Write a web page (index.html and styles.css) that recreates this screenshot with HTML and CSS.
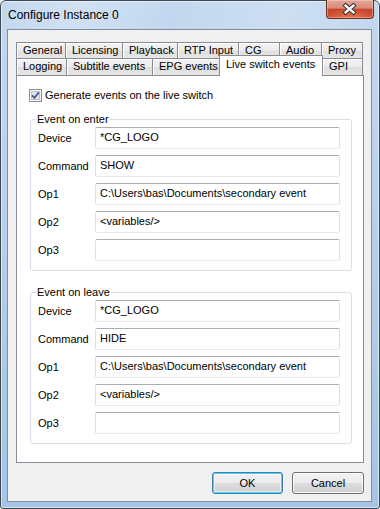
FILE: index.html
```html
<!DOCTYPE html>
<html>
<head>
<meta charset="utf-8">
<link rel="stylesheet" href="styles.css">
</head>
<body>
<div class="window">
  <div class="titlebar">
    <span class="title">Configure Instance 0</span>
    <div class="close">
      <svg width="48" height="19" viewBox="0 0 48 19">
        <path d="M20 6.5 L28 13.5 M28 6.5 L20 13.5" stroke="#3b3b3b" stroke-width="4.6" stroke-linecap="square" fill="none"/>
        <path d="M20 6.5 L28 13.5 M28 6.5 L20 13.5" stroke="#ffffff" stroke-width="2.4" stroke-linecap="square" fill="none"/>
      </svg>
    </div>
  </div>
  <div class="client">
    <div class="tabs">
      <div class="tabrow row1">
        <div class="tab t-general">General</div>
        <div class="tab t-licensing">Licensing</div>
        <div class="tab t-playback">Playback</div>
        <div class="tab t-rtp">RTP Input</div>
        <div class="tab t-cg">CG</div>
        <div class="tab t-audio">Audio</div>
        <div class="tab t-proxy">Proxy</div>
      </div>
      <div class="tabrow row2">
        <div class="tab t-logging">Logging</div>
        <div class="tab t-subtitle">Subtitle events</div>
        <div class="tab t-epg">EPG events</div>
        <div class="tab t-live selected">Live switch events</div>
        <div class="tab t-gpi">GPI</div>
      </div>
    </div>
    <div class="panel">
      <div class="check">
        <span class="box">
          <svg width="13" height="13" viewBox="0 0 13 13">
            <rect x="0.5" y="0.5" width="12" height="12" fill="#f4f4f4" stroke="#8e8f8f"/>
            <rect x="2.5" y="2.5" width="8" height="8" fill="#dfe4ec" stroke="#bcc3cf"/>
            <path d="M3.2 6.4 L5.4 8.9 L9.9 3.4" stroke="#4a5c8c" stroke-width="1.8" fill="none"/>
          </svg>
        </span>
        <span>Generate events on the live switch</span>
      </div>

      <div class="group">
        <span class="legend">Event on enter</span>
        <div class="fields">
          <div class="field"><span class="lbl">Device</span><div class="input">*CG_LOGO</div></div>
          <div class="field"><span class="lbl">Command</span><div class="input">SHOW</div></div>
          <div class="field"><span class="lbl">Op1</span><div class="input">C:\Users\bas\Documents\secondary event</div></div>
          <div class="field"><span class="lbl">Op2</span><div class="input">&lt;variables/&gt;</div></div>
          <div class="field"><span class="lbl">Op3</span><div class="input"></div></div>
        </div>
      </div>

      <div class="group second">
        <span class="legend">Event on leave</span>
        <div class="fields">
          <div class="field"><span class="lbl">Device</span><div class="input">*CG_LOGO</div></div>
          <div class="field"><span class="lbl">Command</span><div class="input">HIDE</div></div>
          <div class="field"><span class="lbl">Op1</span><div class="input">C:\Users\bas\Documents\secondary event</div></div>
          <div class="field"><span class="lbl">Op2</span><div class="input">&lt;variables/&gt;</div></div>
          <div class="field"><span class="lbl">Op3</span><div class="input"></div></div>
        </div>
      </div>
    </div>
    <div class="buttons">
      <div class="btn default">OK</div>
      <div class="btn cancel">Cancel</div>
    </div>
  </div>
</div>
</body>
</html>
```

FILE: styles.css
```css
html, body {
  margin: 0;
  padding: 0;
  background: #ffffff;
}

body {
  font-family: "Liberation Sans", Arial, sans-serif;
  font-size: 11px;
  color: #000;
}

.window {
  width: 380px;
  height: 509px;
  box-sizing: border-box;
  border: 1px solid #3d4856;
  border-radius: 6px 6px 3px 3px;
  background: linear-gradient(to bottom, #c3d8ef 0%, #bcd3ec 30%, #aecae8 70%, #a7c4e5 100%);
  box-shadow: inset 0 0 0 1px rgba(255, 255, 255, 0.55);
  display: flex;
  flex-direction: column;
}

.titlebar {
  height: 28px;
  flex: none;
  display: flex;
  align-items: center;
  padding-left: 7px;
  background: linear-gradient(100deg, rgba(255,255,255,0) 0%, rgba(255,255,255,0.25) 20%, rgba(255,255,255,0) 45%, rgba(255,255,255,0.18) 75%, rgba(255,255,255,0) 100%);
  border-radius: 6px 6px 0 0;
}

.title {
  font-family: "Liberation Sans", Arial, sans-serif;
  font-size: 12px;
  color: #000;
  line-height: 16px;
}

.close {
  margin-left: auto;
  margin-right: 5px;
  align-self: flex-start;
  margin-top: -1px;
  width: 48px;
  height: 19px;
  box-sizing: border-box;
  border: 1px solid #6b2d22;
  border-top: none;
  border-radius: 0 0 4px 4px;
  background:
    radial-gradient(ellipse 60% 55% at 50% 100%, rgba(240, 120, 80, 0.9), rgba(240, 120, 80, 0) 100%),
    linear-gradient(to bottom, #e4a898 0%, #d98a78 45%, #c4452c 52%, #c94a2f 100%);
  box-shadow: inset 0 0 0 1px rgba(255, 210, 200, 0.45);
  display: flex;
  align-items: center;
  justify-content: center;
}

.close svg {
  display: block;
  margin-left: -1px;
  margin-top: -1px;
}

.client {
  flex: 1;
  margin: 0 7px 6px 6px;
  border: 1px solid #7f8fa3;
  background: #f0f0f0;
  padding: 12px 7px 7px 8px;
  display: flex;
  flex-direction: column;
}

.tabs {
  display: flex;
  flex-direction: column;
  flex: none;
}

.tabrow {
  display: flex;
  align-items: flex-start;
}

.row1 { height: 16px; }
.row2 { height: 17px; }

.tab {
  box-sizing: border-box;
  border: 1px solid #898c95;
  border-bottom: none;
  background: linear-gradient(to bottom, #f3f3f3 0%, #ebebeb 50%, #dedede 51%, #e6e6e6 100%);
  box-shadow: inset 1px 1px 0 #ffffff;
  padding-left: 6px;
  white-space: nowrap;
  margin-left: -1px;
}

.tab:first-child { margin-left: 0; }

.row1 .tab { height: 16px; line-height: 14px; }
.row2 .tab { height: 17px; line-height: 15px; }

.t-general { width: 50px; }
.t-licensing { width: 58px; }
.t-playback { width: 56px; }
.t-rtp { width: 62px; }
.t-cg { width: 42px; }
.t-audio { width: 43px; }
.t-proxy { width: 42px; }

.t-logging { width: 51px; }
.t-subtitle { width: 87px; }
.t-epg { width: 68px; }
.t-live { width: 104px; }
.t-gpi { width: 41px; }

.row2 .tab.selected {
  position: relative;
  z-index: 2;
  height: 21px;
  line-height: 17px;
  margin-top: -3px;
  background: #ffffff;
  box-shadow: none;
}

.panel {
  flex: none;
  height: 388px;
  box-sizing: border-box;
  border: 1px solid #898c95;
  background: #ffffff;
  display: flex;
  flex-direction: column;
  padding-top: 13px;
}

.check {
  display: flex;
  align-items: center;
  height: 13px;
  margin-left: 12px;
  gap: 3px;
  line-height: 13px;
}

.box, .box svg {
  display: block;
  width: 13px;
  height: 13px;
}

.group {
  margin: 17px 11px 0 13px;
  border: 1px solid #d5dfe5;
  border-radius: 3px;
  padding: 0 11px 9px 7px;
  display: flex;
  flex-direction: column;
}

.group.second {
  margin-top: 21px;
}

.legend {
  align-self: flex-start;
  margin: -7px 0 0 -2px;
  padding: 0 1px;
  height: 13px;
  line-height: 13px;
  background: #ffffff;
}

.fields {
  margin-top: 1px;
  display: flex;
  flex-direction: column;
  gap: 6px;
}

.field {
  display: flex;
  align-items: center;
  height: 22px;
}

.lbl {
  width: 57px;
  flex: none;
  line-height: 22px;
}

.input {
  flex: 1;
  height: 22px;
  box-sizing: border-box;
  border: 1px solid #dbdfe6;
  border-top-color: #abadb3;
  border-bottom-color: #e3e9ef;
  border-radius: 2px;
  background: #ffffff;
  padding: 0 4px;
  line-height: 19px;
  white-space: nowrap;
  overflow: hidden;
}

.buttons {
  margin-top: 9px;
  display: flex;
  justify-content: flex-end;
  gap: 9px;
}

.btn {
  height: 22px;
  box-sizing: border-box;
  border: 1px solid #707070;
  border-radius: 3px;
  background: linear-gradient(to bottom, #f2f2f2 0%, #ebebeb 50%, #dddddd 51%, #cfcfcf 100%);
  box-shadow: inset 0 0 0 1px rgba(255, 255, 255, 0.8);
  text-align: center;
  line-height: 20px;
}

.btn.default {
  width: 71px;
  border-color: #3c7fb1;
  background: linear-gradient(to bottom, #eaf6fd 0%, #d9f0fc 50%, #bee6fd 51%, #a7d9f5 100%);
  box-shadow: inset 0 0 0 1px #a6d8f4, inset 0 0 0 2px rgba(255,255,255,0.5);
  background: linear-gradient(to bottom, #f2f2f2 0%, #ebebeb 50%, #dddddd 51%, #cfcfcf 100%);
  box-shadow: inset 0 0 0 1px #48d0f6, inset 0 0 0 2px rgba(255,255,255,0.6);
}

.btn.cancel {
  width: 72px;
}
```
